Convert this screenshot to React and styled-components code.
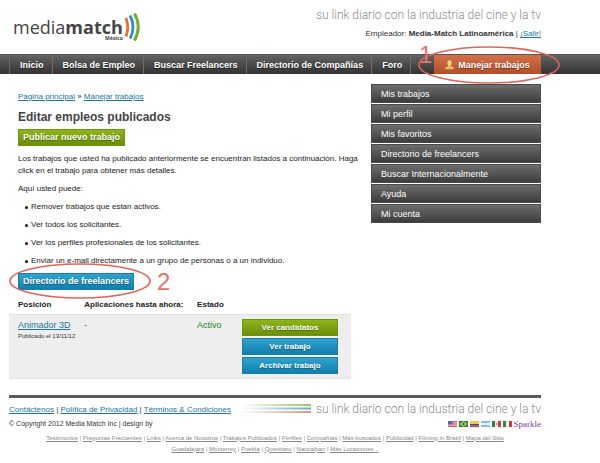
import styled, { createGlobalStyle } from 'styled-components'

const GlobalStyle = createGlobalStyle`
  * {
    box-sizing: border-box;
  }
  body {
    margin: 0;
    background: #fff;
    color: #333;
    font-family: 'Liberation Sans', Arial, sans-serif;
    font-size: 8px;
    line-height: 12px;
  }
  a {
    color: #21759b;
  }
`

const Header = styled.header`
  display: flex;
  justify-content: space-between;
  height: 54px;
  padding: 8px 59px 0 13px;
`

const Logo = styled.a`
  display: flex;
  color: #444;
  text-decoration: none;
`

const LogoName = styled.span`
  display: flex;
  flex-direction: column;
  align-items: flex-end;
  padding-top: 9px;
  font-family: 'Open Sans', sans-serif;
  font-size: 18px;
  line-height: 20px;
`

const LogoCountry = styled.small`
  margin-top: -2px;
  font-size: 5px;
  line-height: 6px;
  font-weight: bold;
`

const LogoWaves = styled.svg`
  width: 18px;
  height: 30px;
  margin: 4px 0 0 1px;
`

const HeaderText = styled.div`
  text-align: right;
`

const Tagline = styled.p`
  margin: 0;
  color: #8c8c8c;
  font-family: Roboto, sans-serif;
  font-size: 12px;
  font-weight: 300;
  line-height: 14px;
  white-space: nowrap;
`

const Account = styled.p`
  margin: 6px 0 0;
`

const Nav = styled.nav`
  display: flex;
  height: 20px;
  padding-left: 9px;
  padding-right: 59px;
  background: linear-gradient(#636363, #333);
  border-top: 1px solid #555;
`

const NavLink = styled.a`
  padding: 0 8px 0 10px;
  border-left: 1px solid #6c6c6c;
  color: #fff;
  font-size: 9px;
  font-weight: bold;
  line-height: 20px;
  text-decoration: none;
  text-shadow: 0 1px 1px #222;

  &:nth-last-child(2) {
    border-right: 1px solid #6c6c6c;
  }
`

const NavEnd = styled.div`
  position: relative;
  margin-left: auto;
`

const ManageLink = styled.a`
  display: flex;
  align-items: center;
  justify-content: center;
  gap: 4px;
  width: 107px;
  height: 19px;
  background: linear-gradient(#d4714a, #b04f2b);
  color: #fff;
  font-size: 9px;
  font-weight: bold;
  text-decoration: none;
  text-shadow: 0 1px 1px #70300f;
`

const Ring = styled.svg`
  position: absolute;
  top: ${(props) => props.$top}px;
  left: ${(props) => props.$left}px;
  width: 142px;
  height: ${(props) => props.$height}px;
  pointer-events: none;
`

const Mark = styled.span`
  position: absolute;
  top: ${(props) => props.$top}px;
  left: ${(props) => props.$left}px;
  color: #ee7268;
  font-size: 24px;
  line-height: 24px;
`

const Content = styled.div`
  display: flex;
  gap: 10px;
  padding: 10px 59px 0 9px;
`

const Main = styled.main`
  flex: 1;
`

const Intro = styled.div`
  padding-left: 9px;
`

const Breadcrumb = styled.div`
  padding-top: 7px;
`

const Title = styled.h1`
  margin: 6px 0 4px;
  color: #444;
  font-size: 12px;
  line-height: 16px;
`

const Button = styled.button`
  display: block;
  width: ${(props) => props.$width || 'auto'};
  height: 17px;
  padding: 0 4px;
  border: 1px solid ${(props) => (props.$green ? '#6d9410' : '#1b7ca6')};
  background: ${(props) =>
    props.$green
      ? 'linear-gradient(#8fb51c, #6a8f06)'
      : 'linear-gradient(#2fa3cf, #107fae)'};
  color: #fff;
  font-family: inherit;
  font-size: ${(props) => (props.$large ? 9 : 8)}px;
  font-weight: bold;
  line-height: 15px;
  white-space: nowrap;
  text-shadow: 0 1px 1px rgba(0, 0, 0, 0.4);
`

const Description = styled.div`
  padding-top: 7px;
  color: #222;
`

const Text = styled.p`
  margin: 0 0 6px;
`

const List = styled.ul`
  margin: 0;
  padding-left: 7px;
  list-style: none;

  li {
    display: flex;
    align-items: center;
    gap: 3px;
    margin-bottom: 6px;
  }
  li::before {
    content: '';
    width: 3px;
    height: 3px;
    border-radius: 50%;
    background: #111;
  }
`

const Anchor = styled.div`
  position: relative;
  width: fit-content;
`

const Jobs = styled.table`
  width: calc(100% - 10px);
  margin-top: 7px;
  border-collapse: collapse;
  text-align: left;

  th {
    height: 17px;
    padding: 0;
    color: #222;
    line-height: 16px;
  }
  td {
    padding: 4px 0;
    vertical-align: top;
    background: #eee;
    border-top: 1px solid #e2e2e2;
    border-bottom: 1px solid #e2e2e2;
  }
  th:first-child,
  td:first-child {
    padding-left: 9px;
  }
`

const Column = styled.col`
  width: ${(props) => props.$width};
`

const JobLink = styled.a`
  font-size: 9px;
`

const Posted = styled.div`
  font-size: 6px;
  line-height: 9px;
`

const Status = styled.span`
  color: #148a14;
  font-size: 9px;
`

const Actions = styled.div`
  display: flex;
  flex-direction: column;
  gap: 2px;
`

const Side = styled.nav`
  display: flex;
  flex-direction: column;
  gap: 1px;
  width: 170px;
`

const SideLink = styled.a`
  height: 19px;
  padding-left: 9px;
  border: 1px solid #4a4a4a;
  background: linear-gradient(#6e6e6e, #3c3c3c);
  color: #fff;
  font-size: 9px;
  line-height: 18px;
  text-decoration: none;
`

const Footer = styled.footer`
  margin: 16px 59px 0 9px;
  border-top: 3px solid #5c5c5c;
`

const FooterRow = styled.div`
  display: flex;
  align-items: flex-end;
  justify-content: space-between;
  padding-top: ${(props) => props.$top || 0}px;
`

const Copyright = styled.span`
  font-size: 7px;
`

const Brand = styled.div`
  display: flex;
  align-items: center;
  gap: 5px;
`

const Stripes = styled.svg`
  width: 70px;
  height: 9px;
`

const Flags = styled.div`
  display: flex;
  align-items: center;
  gap: 2px;

  svg {
    width: 9px;
    height: 6px;
  }
`

const Sparkle = styled.a`
  color: #7d3cae;
  font-family: 'Liberation Serif', serif;
  font-size: 9px;
  text-decoration: none;
`

const SmallLinks = styled.div`
  margin-top: ${(props) => props.$top || 0}px;
  color: #888;
  font-size: 6px;
  line-height: 11px;
  text-align: center;

  a {
    color: #888;
  }
`

const navItems = [
  'Inicio',
  'Bolsa de Empleo',
  'Buscar Freelancers',
  'Directorio de Compañías',
  'Foro',
]

const sideItems = [
  'Mis trabajos',
  'Mi perfil',
  'Mis favoritos',
  'Directorio de freelancers',
  'Buscar Internacionalmente',
  'Ayuda',
  'Mi cuenta',
]

const legalLinks = [
  'Contáctenos',
  'Política de Privacidad',
  'Términos & Condiciones',
]

const siteLinks = [
  'Testimonios',
  'Preguntas Frecuentes',
  'Links',
  'Acerca de Nosotros',
  'Trabajos Publicados',
  'Perfiles',
  'Compañías',
  'Más buscados',
  'Publicidad',
  'Filming in Brazil',
  'Mapa del Sitio',
]

const cityLinks = [
  'Guadalajara',
  'Monterrey',
  'Puebla',
  'Querétaro',
  'Naucalpan',
  'Más Locaciones...',
]

function PipeLinks({ items }) {
  return items.map((item, index) => (
    <span key={item}>
      {index > 0 && ' | '}
      <a href="#">{item}</a>
    </span>
  ))
}

function Circle({ top, left, height }) {
  return (
    <Ring
      $top={top}
      $left={left}
      $height={height}
      viewBox={`0 0 142 ${height}`}
      aria-hidden="true"
    >
      <ellipse
        cx="71"
        cy={height / 2}
        rx="70"
        ry={height / 2 - 1}
        fill="none"
        stroke="#e2655b"
        strokeWidth="1.6"
      />
    </Ring>
  )
}

function UserIcon() {
  return (
    <svg width="9" height="10" viewBox="0 0 9 10" aria-hidden="true">
      <path
        d="M0.2 9.2V8Q0.3 7 3.4 6.2V5H5.600V6.200Q8.700 7 8.800 8V9.200Z"
        fill="#edbd5c"
      />
      <ellipse cx="4.5" cy="3.1" rx="2.2" ry="2.8" fill="#f6d37c" />
    </svg>
  )
}

function FlagIcons() {
  return (
    <>
      <svg viewBox="0 0 9 6" role="img" aria-label="USA">
        <path d="M0 0h9v6H0z" fill="#f3d9dc" />
        <path
          d="M0 .5h9M0 2.2h9M0 3.9h9M0 5.5h9"
          stroke="#d6465a"
          strokeWidth=".9"
        />
        <path d="M0 0h4.5v3.4H0z" fill="#4967b5" />
      </svg>
      <svg viewBox="0 0 9 6" role="img" aria-label="Brasil">
        <path d="M0 0h9v6H0z" fill="#218a3a" />
        <path d="M4.5.5 8.3 3 4.5 5.5.7 3z" fill="#f0dc3c" />
        <circle cx="4.5" cy="3" r="1.3" fill="#2c4f9e" />
      </svg>
      <svg viewBox="0 0 9 6" role="img" aria-label="Colombia">
        <path d="M0 0h9v3H0z" fill="#f2cb35" />
        <path d="M0 3h9v1.5H0z" fill="#31489c" />
        <path d="M0 4.5h9V6H0z" fill="#cf3340" />
      </svg>
      <svg viewBox="0 0 9 6" role="img" aria-label="Argentina">
        <path d="M0 0h9v6H0z" fill="#7cc4ec" />
        <path d="M0 2h9v2H0z" fill="#fff" />
        <circle cx="4.5" cy="3" r=".8" fill="#ecc75a" />
      </svg>
      <svg viewBox="0 0 9 6" role="img" aria-label="México">
        <path d="M0 0h3v6H0z" fill="#23874b" />
        <path d="M3 0h3v6H3z" fill="#f2f2f2" />
        <path d="M6 0h3v6H6z" fill="#d23b3f" />
        <circle cx="4.5" cy="3" r=".9" fill="#9c7a4b" />
      </svg>
      <svg viewBox="0 0 9 6" role="img" aria-label="Italia">
        <path d="M0 0h3v6H0z" fill="#1f9344" />
        <path d="M3 0h3v6H3z" fill="#f7f7f7" />
        <path d="M6 0h3v6H6z" fill="#d9363c" />
      </svg>
    </>
  )
}

function App() {
  return (
    <>
      <GlobalStyle />
      <Header>
        <Logo href="#">
          <LogoName>
            <span>
              media<b>match</b>
            </span>
            <LogoCountry>México</LogoCountry>
          </LogoName>
          <LogoWaves viewBox="0 0 18 30" fill="none" aria-hidden="true">
            <path d="M2 6Q5.500 15 2 24.500" stroke="#ee6b34" strokeWidth="2.8" />
            <path d="M6 3.500Q12 15 6 26.500" stroke="#2a93c6" strokeWidth="2.8" />
            <path d="M10.500 1.500Q18 15 10.500 28.500" stroke="#78ac2a" strokeWidth="3" />
          </LogoWaves>
        </Logo>
        <HeaderText>
          <Tagline>su link diario con la industria del cine y la tv</Tagline>
          <Account>
            Empleador: <b>Media-Match Latinoamérica</b> |{' '}
            <a href="#">¡Salir!</a>
          </Account>
        </HeaderText>
      </Header>

      <Nav>
        {navItems.map((item) => (
          <NavLink href="#" key={item}>
            {item}
          </NavLink>
        ))}
        <NavEnd>
          <ManageLink href="#">
            <UserIcon />
            Manejar trabajos
          </ManageLink>
          <Circle top={-9} left={-16} height={38} />
          <Mark $top={-12} $left={-15}>
            1
          </Mark>
        </NavEnd>
      </Nav>

      <Content>
        <Main>
          <Intro>
            <Breadcrumb>
              <a href="#">Página principal</a> »{' '}
              <a href="#">Manejar trabajos</a>
            </Breadcrumb>
            <Title>Editar empleos publicados</Title>
            <Button $green $large>
              Publicar nuevo trabajo
            </Button>
            <Description>
              <Text>
                Los trabajos que usted ha publicado anteriormente se encuentran
                listados a continuación. Haga click en el trabajo para obtener
                más detalles.
              </Text>
              <Text>Aquí usted puede:</Text>
              <List>
                <li>Remover trabajos que estan activos.</li>
                <li>Ver todos los solicitantes.</li>
                <li>Ver los perfiles profesionales de los solicitantes.</li>
                <li>
                  Enviar un e-mail directamente a un grupo de personas o a un
                  individuo.
                </li>
              </List>
            </Description>
            <Anchor>
              <Button $large>Directorio de freelancers</Button>
              <Circle top={-10} left={-9} height={36} />
              <Mark $top={-3} $left={139}>
                2
              </Mark>
            </Anchor>
          </Intro>

          <Jobs>
            <colgroup>
              <Column $width="22%" />
              <Column $width="33%" />
              <Column />
              <Column $width="109px" />
            </colgroup>
            <thead>
              <tr>
                <th>Posición</th>
                <th>Aplicaciones hasta ahora:</th>
                <th>Estado</th>
                <th aria-label="Acciones" />
              </tr>
            </thead>
            <tbody>
              <tr>
                <td>
                  <JobLink href="#">Animador 3D</JobLink>
                  <Posted>Publicado el 13/11/12</Posted>
                </td>
                <td>-</td>
                <td>
                  <Status>Activo</Status>
                </td>
                <td>
                  <Actions>
                    <Button $green $width="96px">
                      Ver candidatos
                    </Button>
                    <Button $width="96px">Ver trabajo</Button>
                    <Button $width="96px">Archivar trabajo</Button>
                  </Actions>
                </td>
              </tr>
            </tbody>
          </Jobs>
        </Main>

        <Side>
          {sideItems.map((item) => (
            <SideLink href="#" key={item}>
              {item}
            </SideLink>
          ))}
        </Side>
      </Content>

      <Footer>
        <FooterRow $top={4}>
          <div>
            <PipeLinks items={legalLinks} />
          </div>
          <Brand>
            <Stripes
              viewBox="0 0 70 9"
              preserveAspectRatio="none"
              aria-hidden="true"
            >
              <defs>
                <linearGradient id="fade">
                  <stop offset="0" stopColor="#fff" />
                  <stop offset="1" stopColor="#fff" stopOpacity="0" />
                </linearGradient>
              </defs>
              <path d="M0 0h70v2H0z" fill="#9cc25c" />
              <path d="M0 3.500h70v2H0z" fill="#62a9cf" />
              <path d="M0 7h70v2H0z" fill="#dd9a75" />
              <path d="M0 0h70v9H0z" fill="url(#fade)" />
            </Stripes>
            <Tagline>su link diario con la industria del cine y la tv</Tagline>
          </Brand>
        </FooterRow>
        <FooterRow $top={2}>
          <Copyright>© Copyright 2012 Media Match Inc | design by</Copyright>
          <Flags>
            <FlagIcons />
            <Sparkle href="#">Sparkle</Sparkle>
          </Flags>
        </FooterRow>
        <SmallLinks $top={3}>
          <PipeLinks items={siteLinks} />
        </SmallLinks>
        <SmallLinks>
          <PipeLinks items={cityLinks} />
        </SmallLinks>
      </Footer>
    </>
  )
}

export default App
